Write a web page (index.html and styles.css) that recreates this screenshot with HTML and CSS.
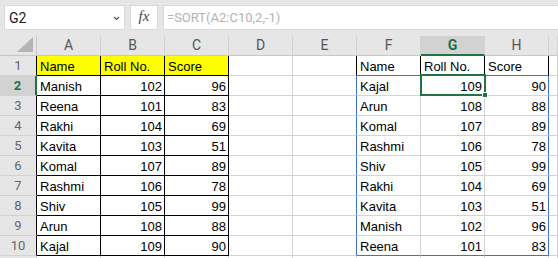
FILE: index.html
```html
<!DOCTYPE html>
<html lang="en">
<head>
    <meta charset="UTF-8">
    <title>SORT</title>
    <link rel="stylesheet" href="styles.css">
</head>
<body>
    <div class="formula-bar">
        <div class="name-box">
            <span>G2</span>
            <svg class="chev" width="7" height="5" viewBox="0 0 7 5"><path d="M1 1 L3.5 3.5 L6 1" fill="none" stroke="#555" stroke-width="1.2"/></svg>
        </div>
        <div class="fx-box">fx</div>
        <div class="formula">=SORT(A2:C10,2,-1)</div>
    </div>

    <div class="sheet">
        <!-- column headers -->
        <div class="corner"><svg width="16" height="15" viewBox="0 0 16 15"><path d="M16 0 L16 15 L0 15 Z" fill="#b4b4b4"/></svg></div>
        <div class="ch">A</div>
        <div class="ch">B</div>
        <div class="ch">C</div>
        <div class="ch">D</div>
        <div class="ch">E</div>
        <div class="ch">F</div>
        <div class="ch active">G</div>
        <div class="ch">H</div>
        <div class="ch"></div>

        <!-- row 1 -->
        <div class="rh edge">1</div>
        <div class="c hl bk">Name</div>
        <div class="c hl bk">Roll No.</div>
        <div class="c hl bk">Score</div>
        <div class="c"></div>
        <div class="c r-k"></div>
        <div class="c r-k b-b">Name</div>
        <div class="c r-k b-b">Roll No.</div>
        <div class="c r-k b-b">Score</div>
        <div class="c"></div>

        <!-- row 2 -->
        <div class="rh active">2</div>
        <div class="c bk">Manish</div>
        <div class="c bk n">102</div>
        <div class="c bk n">96</div>
        <div class="c"></div>
        <div class="c r-b"></div>
        <div class="c">Kajal</div>
        <div class="c n selected">109<span class="handle"></span></div>
        <div class="c n r-b">90</div>
        <div class="c"></div>

        <!-- row 3 -->
        <div class="rh edge">3</div>
        <div class="c bk">Reena</div>
        <div class="c bk n">101</div>
        <div class="c bk n">83</div>
        <div class="c"></div>
        <div class="c r-b"></div>
        <div class="c">Arun</div>
        <div class="c n">108</div>
        <div class="c n r-b">88</div>
        <div class="c"></div>

        <!-- row 4 -->
        <div class="rh edge">4</div>
        <div class="c bk">Rakhi</div>
        <div class="c bk n">104</div>
        <div class="c bk n">69</div>
        <div class="c"></div>
        <div class="c r-b"></div>
        <div class="c">Komal</div>
        <div class="c n">107</div>
        <div class="c n r-b">89</div>
        <div class="c"></div>

        <!-- row 5 -->
        <div class="rh edge">5</div>
        <div class="c bk">Kavita</div>
        <div class="c bk n">103</div>
        <div class="c bk n">51</div>
        <div class="c"></div>
        <div class="c r-b"></div>
        <div class="c">Rashmi</div>
        <div class="c n">106</div>
        <div class="c n r-b">78</div>
        <div class="c"></div>

        <!-- row 6 -->
        <div class="rh edge">6</div>
        <div class="c bk">Komal</div>
        <div class="c bk n">107</div>
        <div class="c bk n">89</div>
        <div class="c"></div>
        <div class="c r-b"></div>
        <div class="c">Shiv</div>
        <div class="c n">105</div>
        <div class="c n r-b">99</div>
        <div class="c"></div>

        <!-- row 7 -->
        <div class="rh edge">7</div>
        <div class="c bk">Rashmi</div>
        <div class="c bk n">106</div>
        <div class="c bk n">78</div>
        <div class="c"></div>
        <div class="c r-b"></div>
        <div class="c">Rakhi</div>
        <div class="c n">104</div>
        <div class="c n r-b">69</div>
        <div class="c"></div>

        <!-- row 8 -->
        <div class="rh edge">8</div>
        <div class="c bk">Shiv</div>
        <div class="c bk n">105</div>
        <div class="c bk n">99</div>
        <div class="c"></div>
        <div class="c r-b"></div>
        <div class="c">Kavita</div>
        <div class="c n">103</div>
        <div class="c n r-b">51</div>
        <div class="c"></div>

        <!-- row 9 -->
        <div class="rh edge">9</div>
        <div class="c bk">Arun</div>
        <div class="c bk n">108</div>
        <div class="c bk n">88</div>
        <div class="c"></div>
        <div class="c r-b"></div>
        <div class="c">Manish</div>
        <div class="c n">102</div>
        <div class="c n r-b">96</div>
        <div class="c"></div>

        <!-- row 10 -->
        <div class="rh edge">10</div>
        <div class="c bk">Kajal</div>
        <div class="c bk n">109</div>
        <div class="c bk n">90</div>
        <div class="c"></div>
        <div class="c r-b"></div>
        <div class="c b-b">Reena</div>
        <div class="c n b-b">101</div>
        <div class="c n r-b b-b">83</div>
        <div class="c"></div>

        <!-- row 11, only its top shows -->
        <div class="rh"></div>
        <div class="c"></div>
        <div class="c"></div>
        <div class="c"></div>
        <div class="c"></div>
        <div class="c"></div>
        <div class="c"></div>
        <div class="c"></div>
        <div class="c"></div>
        <div class="c"></div>
    </div>
</body>
</html>
```

FILE: styles.css
```css
body {
    margin: 0;
    background: #fff;
    overflow: hidden;
    font-family: Roboto, "Liberation Sans", sans-serif;
}
.formula-bar {
    display: flex;
    height: 36px;
    box-sizing: border-box;
    padding: 5px 0 6px 4px;
    gap: 5px;
    background: #e6e6e6;
}
.name-box {
    width: 121px;
    display: flex;
    align-items: center;
    justify-content: space-between;
    box-sizing: border-box;
    padding: 1px 4px 0 4px;
    background: #fff;
    border: 1px solid #d9d9d9;
    font-size: 14px;
    color: #222;
}
.fx-box {
    width: 28px;
    box-sizing: border-box;
    background: #fff;
    border: 1px solid #d9d9d9;
    text-align: center;
    font-family: "Liberation Serif", serif;
    font-style: italic;
    font-size: 15px;
    line-height: 21px;
    color: #444;
}
.formula {
    flex: 1;
    box-sizing: border-box;
    padding: 1px 3px 0;
    background: #fff;
    border: 1px solid #d9d9d9;
    border-right: none;
    font-size: 13px;
    line-height: 22px;
    color: #b3b3b3;
}
.sheet {
    display: grid;
    grid-template-columns: 37px repeat(8, 64px) 1fr;
    grid-auto-rows: 20px;
}
.sheet > div {
    box-sizing: border-box;
    position: relative;
}
.corner {
    background: #e6e6e6;
    border-right: 1px solid #c8c8c8;
    border-bottom: 1px solid #c8c8c8;
    display: flex;
    justify-content: flex-end;
    align-items: flex-end;
    padding: 0 3px 3px 0;
}
.corner svg {
    display: block;
}
.ch {
    background: #e6e6e6;
    border-right: 1px solid #d2d2d2;
    border-bottom: 1px solid #c8c8c8;
    text-align: center;
    font-size: 14px;
    line-height: 19px;
    color: #555;
}
.ch.active {
    background: #d2d2d2;
    color: #217346;
    font-weight: bold;
    border-bottom: 2px solid #217346;
}
.rh {
    background: #e6e6e6;
    border-right: 1px solid #c8c8c8;
    border-bottom: 1px solid #d2d2d2;
    text-align: center;
    font-size: 13px;
    line-height: 19px;
    color: #666;
}
.rh.edge {
    border-right-color: #000;
}
.rh.active {
    background: #d2d2d2;
    color: #217346;
    font-weight: bold;
    border-right: 2px solid #217346;
}
.c {
    border-right: 1px solid #d4d4d4;
    border-bottom: 1px solid #d4d4d4;
    padding: 2px 2px 0 3px;
    font-family: "Liberation Sans", sans-serif;
    font-size: 13px;
    line-height: 17px;
    color: #000;
    white-space: nowrap;
}
.n {
    text-align: right;
}
.hl {
    background: #ffff00;
}
.bk {
    border-right-color: #000;
    border-bottom-color: #000;
}
.r-k {
    border-right-color: #000;
}
.r-b {
    border-right-color: #3f72c8;
}
.b-b {
    border-bottom-color: #3f72c8;
}
.selected::after {
    content: "";
    position: absolute;
    top: -2px;
    left: -1px;
    right: -2px;
    bottom: -1px;
    border: 2px solid #217346;
}
.handle {
    position: absolute;
    right: -4px;
    bottom: -3px;
    width: 6px;
    height: 6px;
    box-sizing: border-box;
    background: #217346;
    border: 1px solid #fff;
    z-index: 2;
}
```
